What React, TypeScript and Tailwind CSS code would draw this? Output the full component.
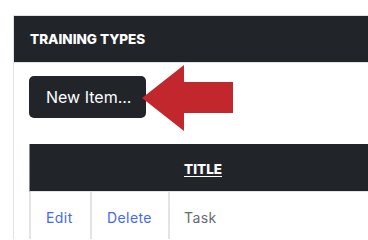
export default function App() {
  return (
    <div className="relative w-[368px] h-[239px] overflow-hidden bg-white" style={{ fontFamily: "Inter, 'Liberation Sans', sans-serif" }}>
      <div className="ml-[13px] mt-[15px] w-[420px] border-l border-t border-[#dee2e6]">
        <div className="h-[47px] bg-[#212529] border-b border-[#dee2e6] flex items-center pl-[16px]">
          <span className="text-white font-extrabold text-[13.5px]">TRAINING TYPES</span>
        </div>
        <div className="pl-[15px] pt-[13px]">
          <button className="h-[42px] w-[117px] rounded-[5px] bg-[#212529] text-white text-[16px] text-left pl-[17px]">
            New Item...
          </button>
          <div className="mt-[26px]">
            <div className="h-[48px] bg-[#212529] border-l border-l-[#8a8d90] border-b border-b-[#dee2e6] flex items-center">
              <div className="w-[60px] shrink-0" />
              <div className="w-[79px] shrink-0" />
              <div className="pl-[15px]">
                <span className="text-white font-extrabold text-[13.5px] underline underline-offset-[2px]">TITLE</span>
              </div>
            </div>
            <div className="h-[60px] flex border-l-2 border-[#e2e3e5] text-[14px] tracking-[0.03em]">
              <div className="w-[61px] shrink-0 border-r-2 border-[#e2e3e5] pl-[15px] pt-[15px] text-[#4169f5]">Edit</div>
              <div className="w-[78px] shrink-0 border-r-2 border-[#e2e3e5] pl-[15px] pt-[15px] text-[#4169f5]">Delete</div>
              <div className="pl-[14px] pt-[15px] text-[#636b73]">Task</div>
            </div>
          </div>
        </div>
      </div>
      <svg className="absolute left-0 top-0" width="368" height="239" viewBox="0 0 368 239">
        <polygon points="142,98 184,65 184,82 233,82 233,113 184,113 184,131" fill="#c1272d" />
      </svg>
    </div>
  );
}
